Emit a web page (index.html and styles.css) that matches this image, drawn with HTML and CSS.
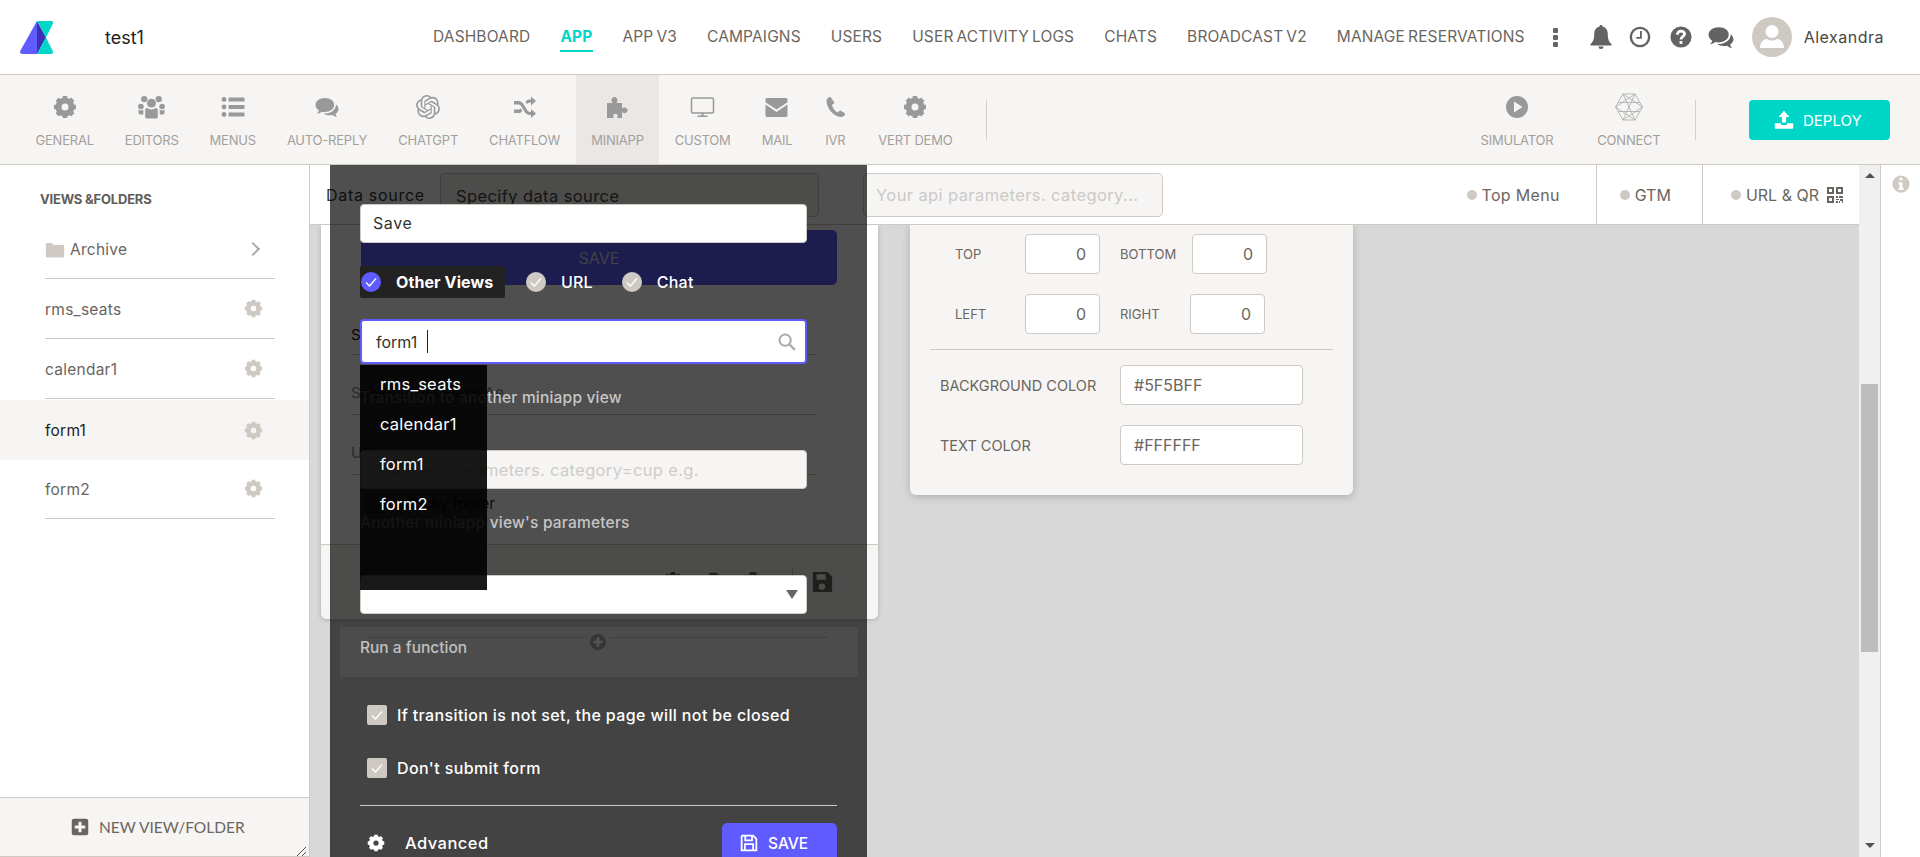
FILE: index.html
```html
<!DOCTYPE html>
<html lang="en">
<head>
    <meta charset="UTF-8">
    <title>Miniapp editor</title>
    <link rel="stylesheet" href="styles.css">
</head>
<body>
<svg class="sprite" xmlns="http://www.w3.org/2000/svg">
    <symbol id="i-cog" viewBox="0 0 24 24">
        <circle cx="12" cy="12" r="6.5" fill="none" stroke="currentColor" stroke-width="6"/>
        <path fill="none" stroke="currentColor" stroke-width="4.6" d="M12 1v4M12 19v4M1 12h4M19 12h4M4.2 4.2 7 7M17 17l2.8 2.8M4.2 19.800 7 17M17 7l2.800-2.800"/>
    </symbol>
    <symbol id="i-users" viewBox="0 0 28 24">
        <circle cx="14" cy="8" r="4.600"/><circle cx="6.500" cy="3.800" r="3.300"/><circle cx="21.500" cy="3.800" r="3.300"/>
        <circle cx="3" cy="11.500" r="2.900"/><circle cx="25" cy="11.500" r="2.900"/>
        <path d="M7.500 15c0-1.500 1.500-2 2.500-2 1 1 2.500 1.500 4 1.500s3-.5 4-1.500c1 0 2.500.5 2.500 2v7c0 1.200-1 2-2 2H9.500c-1 0-2-.8-2-2z"/>
        <path d="M.5 14.500c1 .8 2 1.200 3 1.200l2-1v5H2c-1 0-1.500-1-1.500-2zM27.500 14.500c-1 .8-2 1.200-3 1.200l-2-1v5H26c1 0 1.500-1 1.500-2z"/>
    </symbol>
    <symbol id="i-list" viewBox="0 0 24 24">
        <circle cx="3" cy="4.500" r="2.400"/><circle cx="3" cy="12" r="2.400"/><circle cx="3" cy="19.500" r="2.400"/>
        <rect x="7.500" y="2.500" width="16" height="4" rx=".6"/><rect x="7.500" y="10" width="16" height="4" rx=".6"/><rect x="7.500" y="17.500" width="16" height="4" rx=".6"/>
    </symbol>
    <symbol id="i-comments" viewBox="0 0 24 24">
        <path d="M10 3C4.500 3 .5 6.200.5 10c0 2.200 1.300 4.100 3.400 5.400-.3 1.200-1 2.400-2 3.400 1.800-.2 3.600-1 5-2.100.9.2 1.800.3 2.700.3 5.500 0 9.500-3.200 9.500-7C19.500 6.200 15.500 3 10 3z"/>
        <path d="M21 9.400c1.500 1.200 2.500 2.800 2.500 4.600 0 2-1.200 3.900-3.100 5 .2 1 .8 2 1.700 3-1.800-.2-3.400-1-4.600-2-1 .2-2 .3-3 .3-2.400 0-4.600-.7-6-1.800 6.500.3 12.600-3.200 12.500-9.100z"/>
    </symbol>
    <symbol id="i-openai" viewBox="0 0 24 24">
        <path d="M22.2819 9.8211a5.9847 5.9847 0 0 0-.5157-4.9108 6.0462 6.0462 0 0 0-6.5098-2.9A6.0651 6.0651 0 0 0 4.9807 4.1818a5.9847 5.9847 0 0 0-3.9977 2.9 6.0462 6.0462 0 0 0 .7427 7.0966 5.98 5.98 0 0 0 .511 4.9107 6.051 6.051 0 0 0 6.5146 2.9001A5.9847 5.9847 0 0 0 13.2599 24a6.0557 6.0557 0 0 0 5.7718-4.2058 5.9894 5.9894 0 0 0 3.9977-2.9001 6.0557 6.0557 0 0 0-.7475-7.0729zm-9.022 12.6081a4.4755 4.4755 0 0 1-2.8764-1.0408l.1419-.0804 4.7783-2.7582a.7948.7948 0 0 0 .3927-.6813v-6.7369l2.02 1.1686a.071.071 0 0 1 .038.052v5.5826a4.504 4.504 0 0 1-4.4945 4.4944zm-9.6607-4.1254a4.4708 4.4708 0 0 1-.5346-3.0137l.142.0852 4.783 2.7582a.7712.7712 0 0 0 .7806 0l5.8428-3.3685v2.3324a.0804.0804 0 0 1-.0332.0615L9.74 19.9502a4.4992 4.4992 0 0 1-6.1408-1.6464zM2.3408 7.8956a4.485 4.485 0 0 1 2.3655-1.9728V11.6a.7664.7664 0 0 0 .3879.6765l5.8144 3.3543-2.0201 1.1685a.0757.0757 0 0 1-.071 0l-4.8303-2.7865A4.504 4.504 0 0 1 2.3408 7.872zm16.5963 3.8558L13.1038 8.364 15.1192 7.2a.0757.0757 0 0 1 .071 0l4.8303 2.7913a4.4944 4.4944 0 0 1-.6765 8.1042v-5.6772a.79.79 0 0 0-.407-.667zm2.0107-3.0231l-.142-.0852-4.7735-2.7818a.7759.7759 0 0 0-.7854 0L9.409 9.2297V6.8974a.0662.0662 0 0 1 .0284-.0615l4.8303-2.7866a4.4992 4.4992 0 0 1 6.6802 4.66zM8.3065 12.863l-2.02-1.1638a.0804.0804 0 0 1-.038-.0567V6.0742a4.4992 4.4992 0 0 1 7.3757-3.4537l-.142.0805L8.704 5.459a.7948.7948 0 0 0-.3927.6813zm1.0976-2.3654l2.602-1.4998 2.6069 1.4998v2.9994l-2.5974 1.4997-2.6067-1.4997Z"/>
    </symbol>
    <symbol id="i-shuffle" viewBox="0 0 24 24">
        <path d="M1 6h4.500c2 0 3.500 1 4.600 2.600l4 6.500c.7 1.200 1.700 1.900 3.400 1.900h.5v-3l5 4.500-5 4.500v-3h-.7c-2.700 0-4.400-1.300-5.600-3.100l-4-6.500C7 9.600 6.400 9.500 5.500 9.500H1z"/>
        <path d="M1 14.500h4.500c.9 0 1.600-.4 2.200-1.200l1.600 2.600c-1 1.500-2.200 2.100-3.800 2.100H1zM18 1.500l5 4.500-5 4.500v-3h-.7c-1.600 0-2.500.7-3.200 1.800l-1.600-2.600C13.600 5 15 4.500 17.300 4.500h.7z"/>
    </symbol>
    <symbol id="i-puzzle" viewBox="0 0 24 24">
        <path d="M2 8h5c.8 0-.2-1-.4-1.700C6.100 4.600 7.300 2 9.500 2s3.400 2.600 2.900 4.300c-.2.700-1.200 1.700-.4 1.700h5v5c0 .8 1-.2 1.700-.4 1.700-.5 3.800.5 3.800 2.700s-2.100 3.200-3.800 2.700c-.7-.2-1.700-1.200-1.700-.4V23h-4.500c-.8 0-.1-.8.100-1.500.4-1.500-.5-2.700-2.100-2.700s-2.500 1.200-2.100 2.700c.2.700.9 1.500.1 1.500H2z"/>
    </symbol>
    <symbol id="i-desktop" viewBox="0 0 24 24">
        <rect x="1" y="3" width="22" height="15" rx="1.200" fill="none" stroke="currentColor" stroke-width="1.500"/>
        <path d="M11 18h2v3h-2zM7 20.500h10V22H7z"/>
    </symbol>
    <symbol id="i-mail" viewBox="0 0 24 24">
        <path d="M1 4.500C1 3.700 1.700 3 2.500 3h19c.8 0 1.500.7 1.500 1.500v2.700l-11 7.300L1 7.200z"/>
        <path d="M1 9.600l11 7.300 11-7.300v10.900c0 .8-.7 1.500-1.500 1.500h-19C1.700 22 1 21.300 1 20.500z"/>
    </symbol>
    <symbol id="i-phone" viewBox="0 0 24 24">
        <path d="M6.500 2C5 2.600 3.500 4 3.500 6c0 7 7.500 16 14.500 16 2 0 3.500-1 4-2.500.2-.6-.1-1-.6-1.400l-3.600-2.400c-.6-.4-1.200-.3-1.700.3l-1.300 1.600c-2.700-1-5-4.500-5.800-7.800l1.600-1.100c.5-.4.7-1 .4-1.600L8 2.600C7.700 2 7.100 1.800 6.500 2z"/>
    </symbol>
    <symbol id="i-play" viewBox="0 0 24 24">
        <path fill-rule="evenodd" d="M12 1a11 11 0 1 0 0 22 11 11 0 0 0 0-22zM9 6.500l8.500 5.500L9 17.500z"/>
    </symbol>
    <symbol id="i-connect" viewBox="0 0 28 28">
        <g fill="none" stroke="currentColor" stroke-width=".8">
            <path d="M8 1h12l7.500 13L20 27H8L.5 14zM8 1l12 26M20 1 8 27M.5 14l19.500-13M.5 14 20 27M27.500 14 8 1M27.500 14 8 27M3 9.500h22M3 18.500h22"/>
        </g>
    </symbol>
    <symbol id="i-upload" viewBox="0 0 24 24">
        <path d="M12 1l6.500 7.500H14.500V15h-5V8.500H5.500zM1 16h7c.3 1.200 1 2 2 2h4c1 0 1.700-.8 2-2h7v5.500c0 .5-.5 1-1 1H2c-.5 0-1-.5-1-1z"/>
    </symbol>
    <symbol id="i-bell" viewBox="0 0 24 24">
        <path d="M12 0c-.9 0-1.500.6-1.500 1.400C7 2.200 5.200 5 5.200 9.500c0 5.500-1.700 8-3.700 9.500v1.500h21V19c-2-1.500-3.700-4-3.700-9.500 0-4.500-1.800-7.300-5.300-8.100C13.500.6 12.900 0 12 0zM9.500 21.500a2.500 2.500 0 0 0 5 0z"/>
    </symbol>
    <symbol id="i-clock" viewBox="0 0 24 24">
        <circle cx="12" cy="12" r="10" fill="none" stroke="currentColor" stroke-width="2.600"/>
        <path fill="none" stroke="currentColor" stroke-width="2" d="M13 5.500V13H8"/>
    </symbol>
    <symbol id="i-question" viewBox="0 0 24 24">
        <circle cx="12" cy="12" r="11.500"/>
        <path fill="none" stroke="#fff" stroke-width="3" d="M8 9.500C8 7 10 5.500 12 5.500s4 1.300 4 3.200c0 2.800-4 2.600-4 6"/>
        <rect x="10.400" y="16.500" width="3.200" height="3" fill="#fff"/>
    </symbol>
    <symbol id="i-info" viewBox="0 0 24 24">
        <circle cx="12" cy="12" r="11.500"/>
        <path fill="#fff" d="M10 3.500h4v3.500h-4zM8.500 9.500H14V17h1.500v3h-7v-3H10v-4.500H8.500z"/>
    </symbol>
    <symbol id="i-folder" viewBox="0 0 24 24">
        <path d="M1 5.500C1 4.500 1.700 3.500 2.500 3.500H8L10.500 6h11c.8 0 1.500.7 1.500 1.500v12c0 .8-.7 1.500-1.500 1.500h-19C1.700 21 1 20.300 1 19.500z"/>
    </symbol>
    <symbol id="i-plus-square" viewBox="0 0 24 24">
        <rect x="1" y="1" width="22" height="22" rx="3"/>
        <path fill="#f6f5f3" d="M10 5h4v5h5v4h-5v5h-4v-5H5v-4h5z"/>
    </symbol>
    <symbol id="i-plus-circle" viewBox="0 0 24 24">
        <circle cx="12" cy="12" r="12"/>
        <path fill="#f6f5f3" d="M10 5h4v5h5v4h-5v5h-4v-5H5v-4h5z"/>
    </symbol>
    <symbol id="i-save" viewBox="0 0 24 24">
        <path fill-rule="evenodd" d="M3 1h15l5 5v16c0 .6-.4 1-1 1H3c-.6 0-1-.4-1-1V2c0-.6.4-1 1-1zM6 3.500v6h10v-6zM12 13.500a3.500 3.500 0 1 0 0 7 3.500 3.500 0 0 0 0-7z"/>
    </symbol>
    <symbol id="i-save-line" viewBox="0 0 24 24">
        <path fill="none" stroke="currentColor" stroke-width="2.400" d="M3.200 2.200h14.300l4.300 4.300v15.300H2.200V3.200zM7 2.500v6h9v-6M6.500 21.500v-8h11v8"/>
    </symbol>
    <symbol id="i-copy" viewBox="0 0 24 24">
        <path d="M8 2h8l5 5v13H8zM3 7h4v15h11v1H3z"/>
    </symbol>
    <symbol id="i-trash" viewBox="0 0 24 24">
        <path d="M8 3c0-1 1-2 2-2h4c1 0 2 1 2 2v1h5v2H3V4h5zM5 8h14v14c0 .6-.4 1-1 1H6c-.6 0-1-.4-1-1z"/>
    </symbol>
    <symbol id="i-search" viewBox="0 0 24 24">
        <circle cx="9.500" cy="9.500" r="7.500" fill="none" stroke="currentColor" stroke-width="2.600"/>
        <path fill="none" stroke="currentColor" stroke-width="3.200" d="m15 15 7.500 7.500"/>
    </symbol>
    <symbol id="i-qr" viewBox="0 0 16 16">
        <path fill-rule="evenodd" d="M0 0h7v7H0zM2 2v3h3V2zM9 0h7v7H9zM11 2v3h3V2zM0 9h7v7H0zM2 11v3h3v-3zM9 9h2v2H9zM12 9h4v2h-4zM9 12h3v1H9zM13 12h3v4h-1v-2h-2zM9 14h2v2H9zM12 14h1v2h-1z"/>
    </symbol>
    <symbol id="i-check" viewBox="0 0 20 20">
        <path fill="none" stroke="currentColor" stroke-width="1.300" d="M5 10.500 8.500 14 15 6.500"/>
    </symbol>
</svg>

<header class="top-nav">
    <svg class="logo" viewBox="0 0 33 33" aria-label="logo">
        <path fill="#5f5bff" d="M17 0 .5 29.500C-.5 31.500 .5 33 2.500 33H17z"/>
        <path fill="#3a2fb5" d="M17 0v33l9-16.500z"/>
        <path fill="#00d6c8" d="M17 0h14c1.500 0 2.500 1.200 2 2.500L26 16.500zM17 33h14c1.500 0 2.500-1.200 2-2.500L26 16.500z"/>
    </svg>
    <span class="app-name">test1</span>
    <nav class="main-menu">
        <a>DASHBOARD</a>
        <a class="active">APP</a>
        <a>APP V3</a>
        <a>CAMPAIGNS</a>
        <a>USERS</a>
        <a>USER ACTIVITY LOGS</a>
        <a>CHATS</a>
        <a>BROADCAST V2</a>
        <a>MANAGE RESERVATIONS</a>
    </nav>
    <span class="kebab"><i></i><i></i><i></i></span>
    <svg class="nav-ico ico-bell"><use href="#i-bell"/></svg>
    <svg class="nav-ico ico-clock"><use href="#i-clock"/></svg>
    <svg class="nav-ico ico-question"><use href="#i-question"/></svg>
    <svg class="nav-ico ico-comments"><use href="#i-comments"/></svg>
    <svg class="avatar" viewBox="0 0 40 40">
        <circle cx="20" cy="20" r="20" fill="#cfc9c3"/>
        <circle cx="20" cy="14.500" r="6.500" fill="#fff"/>
        <path fill="#fff" d="M8 31c0-6 4-9 7-9 1.500 1 3 1.500 5 1.500s3.500-.5 5-1.500c3 0 7 3 7 9z"/>
    </svg>
    <span class="user-name">Alexandra</span>
</header>

<section class="toolbar">
    <a class="tool"><svg class="tool-ico"><use href="#i-cog"/></svg><span>GENERAL</span></a>
    <a class="tool"><svg class="tool-ico tool-ico-wide"><use href="#i-users"/></svg><span>EDITORS</span></a>
    <a class="tool"><svg class="tool-ico"><use href="#i-list"/></svg><span>MENUS</span></a>
    <a class="tool"><svg class="tool-ico"><use href="#i-comments"/></svg><span>AUTO-REPLY</span></a>
    <a class="tool"><svg class="tool-ico"><use href="#i-openai"/></svg><span>CHATGPT</span></a>
    <a class="tool"><svg class="tool-ico"><use href="#i-shuffle"/></svg><span>CHATFLOW</span></a>
    <a class="tool active"><svg class="tool-ico"><use href="#i-puzzle"/></svg><span>MINIAPP</span></a>
    <a class="tool"><svg class="tool-ico tool-ico-wide"><use href="#i-desktop"/></svg><span>CUSTOM</span></a>
    <a class="tool"><svg class="tool-ico tool-ico-wide"><use href="#i-mail"/></svg><span>MAIL</span></a>
    <a class="tool"><svg class="tool-ico"><use href="#i-phone"/></svg><span>IVR</span></a>
    <a class="tool"><svg class="tool-ico"><use href="#i-cog"/></svg><span>VERT DEMO</span></a>
    <span class="tool-sep"></span>
    <a class="tool tool-sim"><svg class="tool-ico"><use href="#i-play"/></svg><span>SIMULATOR</span></a>
    <a class="tool"><svg class="tool-ico tool-ico-big"><use href="#i-connect"/></svg><span>CONNECT</span></a>
    <span class="tool-sep tool-sep-right"></span>
    <a class="deploy"><svg class="deploy-ico"><use href="#i-upload"/></svg>DEPLOY</a>
</section>

<main class="main">
    <aside class="sidebar">
        <h4 class="side-title">VIEWS &amp;FOLDERS</h4>
        <ul class="view-list">
            <li class="view-row"><div class="view-in"><span class="view-name"><svg class="folder-ico"><use href="#i-folder"/></svg>Archive</span><span class="chevron"></span></div></li>
            <li class="view-row"><div class="view-in"><span class="view-name">rms_seats</span><svg class="row-cog"><use href="#i-cog"/></svg></div></li>
            <li class="view-row"><div class="view-in"><span class="view-name">calendar1</span><svg class="row-cog"><use href="#i-cog"/></svg></div></li>
            <li class="view-row selected"><div class="view-in"><span class="view-name">form1</span><svg class="row-cog"><use href="#i-cog"/></svg></div></li>
            <li class="view-row"><div class="view-in"><span class="view-name">form2</span><svg class="row-cog"><use href="#i-cog"/></svg></div></li>
        </ul>
        <div class="side-foot">
            <svg class="plus-ico"><use href="#i-plus-square"/></svg>
            <span>NEW VIEW/FOLDER</span>
            <svg class="resize" viewBox="0 0 10 10"><path fill="none" stroke="#555" d="M0 10 9 1M5 10l4-4"/></svg>
        </div>
    </aside>

    <div class="workspace">
        <div class="sub-bar">
            <span class="src-label">Data source</span>
            <input class="src-input" placeholder="Specify data source">
            <input class="api-input" placeholder="Your api parameters. category...">
            <div class="tabs">
                <a class="tab tab-menu"><i class="dot"></i>Top Menu</a>
                <a class="tab tab-gtm"><i class="dot"></i>GTM</a>
                <a class="tab tab-url"><i class="dot"></i>URL &amp; QR<svg class="qr-ico"><use href="#i-qr"/></svg></a>
            </div>
        </div>
        <div class="canvas">
            <div class="edit-col">
                <div class="edit-card">
                    <div class="big-save">SAVE</div>
                    <div class="form-row form-row-first">Style</div>
                    <div class="form-row">Select a page size Ae</div>
                    <div class="form-row">URL</div>
                    <div class="sticky-row"><i class="sticky-box"></i>Sticky footer</div>
                    <div class="card-foot">
                        <svg class="foot-ico"><use href="#i-cog"/></svg>
                        <svg class="foot-ico"><use href="#i-copy"/></svg>
                        <svg class="foot-ico"><use href="#i-trash"/></svg>
                        <span class="foot-sep"></span>
                        <svg class="foot-ico"><use href="#i-save"/></svg>
                    </div>
                </div>
                <div class="add-row">
                    <span class="dots dots-l"></span>
                    <svg class="add-ico"><use href="#i-plus-circle"/></svg>
                    <span class="dots dots-r"></span>
                </div>
            </div>
            <div class="style-card">
                <div class="pad-row">
                    <label class="pad-label">TOP</label><input class="pad-input" value="0">
                    <label class="pad-label2">BOTTOM</label><input class="pad-input" value="0">
                </div>
                <div class="pad-row">
                    <label class="pad-label">LEFT</label><input class="pad-input" value="0">
                    <label class="pad-label2 pad-label2-r">RIGHT</label><input class="pad-input" value="0">
                </div>
                <hr class="style-hr">
                <div class="color-row"><label>BACKGROUND COLOR</label><input value="#5F5BFF"></div>
                <div class="color-row"><label>TEXT COLOR</label><input value="#FFFFFF"></div>
            </div>
        </div>
    </div>

    <div class="scrollbar">
        <i class="arrow-up"></i>
        <i class="thumb"></i>
        <i class="arrow-down"></i>
    </div>
    <aside class="info-panel"><svg class="info-ico"><use href="#i-info"/></svg></aside>

    <!-- button settings popup, sits over the editor -->
    <div class="modal">
        <input class="m-input" value="Save">
        <div class="radio-row">
            <span class="radio on"><span class="radio-dot"><svg class="radio-check"><use href="#i-check"/></svg></span>Other Views</span>
            <span class="radio"><span class="radio-dot"><svg class="radio-check"><use href="#i-check"/></svg></span>URL</span>
            <span class="radio"><span class="radio-dot"><svg class="radio-check"><use href="#i-check"/></svg></span>Chat</span>
        </div>
        <div class="search-box">
            <span class="search-text">form1</span><i class="caret"></i>
            <svg class="search-ico"><use href="#i-search"/></svg>
        </div>
        <ul class="drop">
            <li>rms_seats</li>
            <li>calendar1</li>
            <li>form1</li>
            <li>form2</li>
        </ul>
        <p class="hint">Transition to another miniapp view</p>
        <input class="m-input m-input-soft" placeholder="Your api parameters. category=cup e.g.">
        <p class="hint">Another miniapp view's parameters</p>
        <div class="m-select"><i class="select-arrow"></i></div>
        <div class="run-fn">Run a function</div>
        <label class="check check-first"><span class="check-box"><svg class="box-check"><use href="#i-check"/></svg></span>If transition is not set, the page will not be closed</label>
        <label class="check"><span class="check-box"><svg class="box-check"><use href="#i-check"/></svg></span>Don't submit form</label>
        <hr class="m-hr">
        <div class="m-foot">
            <span class="advanced"><svg class="adv-ico"><use href="#i-cog"/></svg>Advanced</span>
            <button class="m-save"><svg class="m-save-ico"><use href="#i-save-line"/></svg>SAVE</button>
        </div>
    </div>
</main>
</body>
</html>
```

FILE: styles.css
```css
*{
    margin:0;
    padding:0;
    box-sizing:border-box;
}
html,body{
    width:1920px;
    height:857px;
    overflow:hidden;
}
body{
    font-family:Inter,"Noto Sans",sans-serif;
    font-size:15px;
    color:#6b6560;
    background:#fff;
}
ul{
    list-style:none;
}
input,button{
    font-family:inherit;
    outline:none;
}
svg{
    fill:currentColor;
    display:block;
    flex:none;
}
.sprite{
    width:0;
    height:0;
    position:absolute;
}

/* top nav */
.top-nav{
    height:75px;
    border-bottom:1px solid #cfc9c3;
    display:flex;
    align-items:center;
    padding-left:20px;
}
.logo{
    width:33px;
    height:33px;
}
.app-name{
    margin-left:52px;
    font-size:18px;
    color:#222;
    width:40px;
}
.main-menu{
    margin-left:288px;
    display:flex;
    gap:30px;
    align-self:flex-start;
    padding-top:27px;
}
.main-menu a{
    height:25px;
    font-size:15.5px;
    line-height:19px;
    letter-spacing:.14px;
    word-spacing:-1.5px;
    white-space:nowrap;
}
.main-menu a.active{
    color:#00d6c8;
    font-weight:700;
    border-bottom:2px solid #00d6c8;
}
.kebab{
    margin-left:28px;
    display:flex;
    flex-direction:column;
    gap:2px;
}
.kebab i{
    width:5px;
    height:5px;
    background:#666;
    border-radius:1px;
}
.nav-ico{
    color:#636363;
}
.ico-bell{
    width:24px;
    height:24px;
    margin-left:31px;
}
.ico-clock{
    width:22px;
    height:22px;
    margin-left:16px;
}
.ico-question{
    width:22px;
    height:22px;
    margin-left:19px;
}
.ico-comments{
    width:26px;
    height:26px;
    margin-left:16px;
}
.avatar{
    width:40px;
    height:40px;
    margin-left:18px;
}
.user-name{
    margin-left:12px;
    font-size:16px;
    color:#4a4642;
    letter-spacing:.5px;
}

/* tool strip */
.toolbar{
    height:90px;
    background:#f6f5f3;
    border-bottom:1px solid #cfc9c3;
    display:flex;
    align-items:stretch;
    padding-left:20px;
}
.tool{
    padding:20px 15.5px 0;
    display:flex;
    flex-direction:column;
    align-items:center;
    font-size:13px;
    letter-spacing:-.22px;
    color:#a3a09c;
    white-space:nowrap;
}
.tool span{
    margin-top:12px;
    line-height:18px;
}
.tool.active{
    background:#eae7e4;
}
.tool-ico{
    width:24px;
    height:24px;
    color:#999;
}
.tool-ico-wide{
    width:27px;
}
.tool-ico-big{
    width:28px;
    height:28px;
    margin-top:-2px;
    margin-bottom:-2px;
    color:#aaa;
}
.tool-sep{
    width:1px;
    height:40px;
    margin:25px 0 0 18px;
    background:#d4d0cc;
}
.tool-sim{
    margin-left:auto;
    margin-right:13px;
}
.tool-sep-right{
    margin-left:19px;
}
.deploy{
    width:141px;
    height:40px;
    margin:25px 30px 0 53px;
    border-radius:4px;
    background:#00d6c8;
    color:#fff;
    font-size:15px;
    display:flex;
    align-items:center;
    padding-left:25px;
    gap:9px;
}
.deploy-ico{
    width:20px;
    height:20px;
}

/* main area */
.main{
    height:692px;
    display:flex;
    position:relative;
}
.sidebar{
    width:310px;
    border-right:1px solid #cfc9c3;
    display:flex;
    flex-direction:column;
}
.side-title{
    height:54px;
    padding:26px 0 0 40px;
    font-size:13px;
    line-height:16px;
    font-weight:700;
    color:#615d59;
    letter-spacing:-.2px;
}
.view-list{
    flex:1;
}
.view-row{
    height:60px;
    padding:0 34px 0 45px;
}
.view-in{
    height:60px;
    border-bottom:1px solid #cfc9c3;
    display:flex;
    align-items:center;
    justify-content:space-between;
}
.view-row.selected{
    background:#f6f5f3;
    margin-top:1px;
    margin-bottom:-1px;
}
.view-row.selected .view-in{
    border-bottom:none;
    color:#222;
}
.view-row.selected .view-name{
    padding-top:0;
}
.view-name{
    display:flex;
    align-items:center;
    font-size:15.5px;
    letter-spacing:.25px;
    padding-top:2px;
}
.folder-ico{
    width:20px;
    height:20px;
    margin-right:5px;
    color:#cfc9c3;
}
.chevron{
    width:10px;
    height:10px;
    margin-right:17px;
    border-top:2px solid #aaa;
    border-right:2px solid #aaa;
    transform:rotate(45deg);
}
.row-cog{
    width:19px;
    height:19px;
    margin-right:12px;
    color:#cfc9c3;
}
.side-foot{
    height:60px;
    background:#f6f5f3;
    border-top:1px solid #cfc9c3;
    border-bottom:1px solid #cfc9c3;
    display:flex;
    align-items:center;
    padding-left:71px;
    font-family:Lato,sans-serif;
    font-size:15.5px;
    color:#6b6560;
    position:relative;
}
.plus-ico{
    width:18px;
    height:18px;
    margin-right:10px;
}
.resize{
    width:10px;
    height:10px;
    position:absolute;
    right:2px;
    bottom:0;
}

.workspace{
    width:1549px;
    display:flex;
    flex-direction:column;
}
.sub-bar{
    height:60px;
    flex:none;
    border-bottom:1px solid #cfc9c3;
    display:flex;
    align-items:center;
    background:#fff;
    padding-left:16px;
}
.src-label{
    font-size:16px;
    letter-spacing:.7px;
    color:#333;
    width:114px;
}
.src-input,.api-input{
    height:44px;
    border:1px solid #cfc9c3;
    border-radius:5px;
    background:#f6f5f3;
    font-size:16.5px;
    letter-spacing:.4px;
}
.src-input{
    width:379px;
    padding:3px 0 0 15px;
}
.src-input::placeholder{
    color:#444;
}
.api-input{
    width:300px;
    margin-left:44px;
    padding-left:12px;
}
.api-input::placeholder{
    color:#ccc9c6;
}
.tabs{
    margin-left:auto;
    display:flex;
    height:59px;
}
.tab{
    display:flex;
    align-items:center;
    font-size:16px;
    color:#6b6560;
    border-left:1px solid #cfc9c3;
    padding:0 31px 0 23px;
}
.tab-menu{
    border-left:none;
    padding-right:36px;
    letter-spacing:.3px;
}
.tab-url{
    padding:0 16px 0 28px;
}
.dot{
    width:10px;
    height:10px;
    border-radius:50%;
    background:#cfc9c3;
    margin-right:5px;
}
.qr-ico{
    width:16px;
    height:16px;
    margin-left:8px;
}
.canvas{
    flex:1;
    background:#d8d8d8;
    display:flex;
    align-items:flex-start;
    padding-left:11px;
    overflow:hidden;
}
.edit-col{
    width:557px;
    flex:none;
}
.edit-card{
    height:394px;
    background:#fff;
    border-radius:0 0 6px 6px;
    box-shadow:0 1px 5px rgba(0,0,0,.2);
    display:flex;
    flex-direction:column;
}
.big-save{
    height:55px;
    margin:5px 41px 0 40px;
    border-radius:5px;
    background:#5f5bff;
    color:#d0d0d0;
    font-size:16px;
    display:flex;
    align-items:center;
    justify-content:center;
    flex:none;
}
.form-row{
    height:60px;
    flex:none;
    margin:0 61px 0 30px;
    display:flex;
    align-items:flex-end;
    padding-bottom:10px;
    border-bottom:1px solid #cfc9c3;
    font-size:15px;
    line-height:22px;
    color:#888;
}
.form-row-first{
    height:70px;
    padding-bottom:8px;
    color:#222;
}
.sticky-row{
    margin:18px 0 0 45px;
    display:flex;
    align-items:center;
    line-height:22px;
    font-size:15px;
    color:#222;
}
.sticky-box{
    width:20px;
    height:20px;
    margin-right:19px;
    border-radius:3px;
    background:#cfc9c3;
}
.card-foot{
    margin-top:auto;
    height:75px;
    flex:none;
    background:#f6f5f3;
    border-top:1px solid #cfc9c3;
    border-radius:0 0 6px 6px;
    display:flex;
    justify-content:flex-end;
    align-items:flex-start;
    gap:18px;
    padding:26px 45px 0 0;
    color:#6b6560;
}
.foot-ico{
    width:22px;
    height:22px;
}
.foot-sep{
    width:1px;
    height:30px;
    margin:-4px 0 0 10px;
    background:#cfc9c3;
}
.add-row{
    display:flex;
    align-items:flex-start;
    margin:15px 0 0 49px;
    color:#8a8a8a;
}
.dots{
    height:1px;
    margin-top:3px;
    border-top:1px dotted #888;
}
.dots-l{
    width:216px;
}
.dots-r{
    width:217px;
}
.add-ico{
    width:16px;
    height:16px;
    margin:0 4px;
}
.style-card{
    width:443px;
    height:270px;
    flex:none;
    margin-left:32px;
    padding-top:9px;
    background:#f6f5f3;
    border-radius:0 0 6px 6px;
    box-shadow:0 2px 8px rgba(0,0,0,.2);
}
.pad-row{
    display:flex;
    align-items:center;
    margin-bottom:20px;
    font-size:13px;
    color:#6b6560;
}
.pad-label{
    width:115px;
    padding-left:45px;
}
.pad-label2{
    width:72px;
    margin-left:20px;
}
.pad-label2-r{
    width:70px;
}
.pad-input{
    width:75px;
    height:40px;
    border:1px solid #cfc9c3;
    border-radius:4px;
    background:#fff;
    font-size:16px;
    color:#6b6560;
    text-align:right;
    padding-right:13px;
}
.style-hr{
    border:none;
    border-top:1px solid #cfc9c3;
    margin:-5px 20px 15px;
}
.color-row{
    display:flex;
    align-items:center;
    margin-bottom:20px;
    padding-left:30px;
    font-size:14.5px;
    color:#6b6560;
}
.color-row label{
    width:180px;
}
.color-row input{
    width:183px;
    height:40px;
    border:1px solid #cfc9c3;
    border-radius:4px;
    background:#fff;
    font-size:16px;
    color:#6b6560;
    padding-left:13px;
}
.scrollbar{
    width:21px;
    flex:none;
    background:#f0f0f0;
    display:flex;
    flex-direction:column;
    align-items:center;
}
.arrow-up{
    margin-top:8px;
    border:5px solid transparent;
    border-top:none;
    border-bottom-color:#505050;
}
.thumb{
    width:17px;
    height:268px;
    margin-top:206px;
    background:#bdbdbd;
}
.arrow-down{
    margin-top:auto;
    margin-bottom:9px;
    border:5px solid transparent;
    border-bottom:none;
    border-top-color:#505050;
}
.info-panel{
    flex:1;
    border-left:1px solid #cfc9c3;
    padding:10px 0 0 11px;
}
.info-ico{
    width:18px;
    height:18px;
    color:#cfc9c3;
}

/* popup */
.modal{
    position:absolute;
    left:330px;
    top:0;
    width:537px;
    height:692px;
    padding:39px 30px 0;
    background:rgba(0,0,0,.69);
    overflow:hidden;
    color:#fff;
}
.m-input{
    display:block;
    width:447px;
    height:39px;
    border:1px solid #cfc9c3;
    border-radius:4px;
    background:#fff;
    padding:0 0 2px 12px;
    font-size:16px;
    letter-spacing:.6px;
    color:#333;
}
.m-input-soft{
    margin-top:41px;
    background:#f6f5f3;
    font-size:16.5px;
    letter-spacing:.35px;
    padding:0 0 0 15px;
}
.m-input-soft::placeholder{
    color:#cfccc9;
}
.radio-row{
    margin-top:23px;
    height:32px;
    display:flex;
}
.radio{
    height:32px;
    display:flex;
    align-items:center;
    font-size:16px;
    letter-spacing:.2px;
    font-weight:500;
    margin-right:29px;
    padding-bottom:1px;
}
.radio.on{
    width:145px;
    margin-right:21px;
    font-weight:700;
    letter-spacing:.1px;
    background:#222;
    border-radius:2px;
    padding-left:1px;
}
.radio-dot{
    width:20px;
    height:20px;
    margin-right:15px;
    border-radius:50%;
    background:#cfc9c3;
}
.radio.on .radio-dot{
    background:#5f5bff;
}
.radio-check{
    width:20px;
    height:20px;
}
.search-box{
    margin-top:21px;
    width:447px;
    height:45px;
    display:flex;
    align-items:center;
    border:2px solid #5f5bff;
    border-radius:4px;
    background:#fff;
    padding-left:14px;
    color:#333;
    font-size:16px;
}
.search-text{
    width:51px;
}
.caret{
    width:1px;
    height:23px;
    background:#222;
}
.search-ico{
    width:18px;
    height:18px;
    margin-left:auto;
    margin-right:9px;
    color:#aaa;
}
.drop{
    position:absolute;
    left:30px;
    top:200px;
    width:127px;
    height:225px;
    padding-top:0;
    background:rgba(0,0,0,.9);
    z-index:2;
}
.drop li{
    height:40px;
    line-height:39px;
    padding-left:20px;
    font-size:16.5px;
    letter-spacing:.25px;
}
.hint{
    margin-top:23px;
    line-height:22px;
    font-size:15.5px;
    letter-spacing:.2px;
    font-weight:500;
    color:#c6c6c6;
}
.m-input-soft + .hint{
    margin-top:23px;
}
.m-select{
    margin-top:41px;
    width:447px;
    height:39px;
    border:1px solid #cfc9c3;
    border-radius:4px;
    background:#fff;
    position:relative;
}
.select-arrow{
    position:absolute;
    right:8px;
    top:14px;
    border:6px solid transparent;
    border-bottom:none;
    border-top:9px solid #666;
}
.run-fn{
    margin:13px -21px 0 -20px;
    height:50px;
    padding:10px 0 0 20px;
    background:rgba(255,255,255,.05);
    font-size:15.5px;
    line-height:22px;
    font-weight:500;
    color:#c0c0c0;
}
.check{
    display:flex;
    align-items:center;
    height:20px;
    margin:33px 0 0 7px;
    font-size:16px;
    letter-spacing:.37px;
    font-weight:500;
}
.check-first{
    margin-top:28px;
}
.check-box{
    width:20px;
    height:20px;
    margin-right:10px;
    border-radius:2px;
    background:#cfc9c3;
}
.box-check{
    width:20px;
    height:20px;
}
.m-hr{
    border:none;
    border-top:1px solid #cfc9c3;
    margin-top:27px;
}
.m-foot{
    margin-top:17px;
    display:flex;
    justify-content:space-between;
}
.advanced{
    display:flex;
    align-items:center;
    padding-left:7px;
    font-size:16.5px;
    font-weight:500;
    letter-spacing:.45px;
}
.adv-ico{
    width:18px;
    height:18px;
    margin-right:20px;
}
.m-save{
    width:115px;
    height:40px;
    border:none;
    border-radius:5px;
    background:#5f5bff;
    color:#fff;
    font-size:15.5px;
    font-weight:500;
    display:flex;
    align-items:center;
    padding-left:18px;
    gap:10px;
}
.m-save-ico{
    width:18px;
    height:18px;
}
```
